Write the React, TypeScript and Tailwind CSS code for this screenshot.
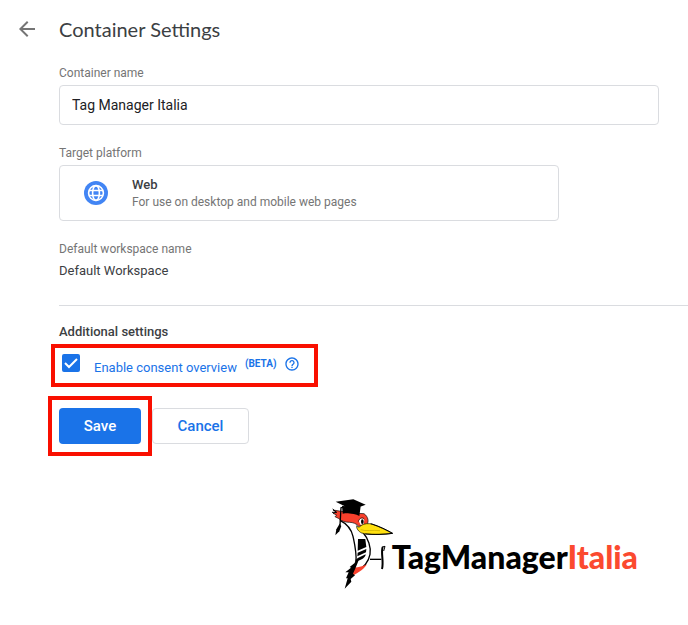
import { useState } from "react";

function BackArrow() {
  return (
    <svg viewBox="0 0 24 24" className="size-6" fill="#757575" aria-hidden="true">
      <path d="M20 11H7.83l5.59-5.59L12 4l-8 8 8 8 1.41-1.41L7.83 13H20v-2z" />
    </svg>
  );
}

function WebIcon() {
  return (
    <svg viewBox="0 0 24 24" className="size-6" aria-hidden="true">
      <circle cx="12" cy="12" r="12" fill="#4285f4" />
      <g fill="none" stroke="#fff" strokeWidth="1.6">
        <circle cx="12" cy="12" r="7.4" />
        <ellipse cx="12" cy="12" rx="3.4" ry="7.4" />
        <path d="M5 9.5h14M5 14.5h14" />
      </g>
    </svg>
  );
}

function HelpIcon() {
  return (
    <svg viewBox="0 0 24 24" className="size-4" fill="#1a73e8" aria-hidden="true">
      <path d="M11 18h2v-2h-2v2zm1-16C6.48 2 2 6.48 2 12s4.48 10 10 10 10-4.48 10-10S17.52 2 12 2zm0 18c-4.41 0-8-3.59-8-8s3.59-8 8-8 8 3.59 8 8-3.59 8-8 8zm0-14c-2.21 0-4 1.79-4 4h2c0-1.1.9-2 2-2s2 .9 2 2c0 2-3 1.75-3 5h2c0-2.25 3-2.5 3-5 0-2.21-1.79-4-4-4z" />
    </svg>
  );
}

function Woodpecker() {
  return (
    <svg viewBox="18 24 192 270" className="h-[90px] w-16 shrink-0" aria-hidden="true">
      {/* body */}
      <path d="M52 90C68 100 80 112 86 132C94 160 98 190 97 206L78 244L90 246C106 236 124 226 134 210C144 190 140 166 128 146L120 122L96 94Z" fill="#fff" />
      <path d="M48 88C68 98 82 114 87 136C93 164 98 184 96 212" fill="none" stroke="#000" strokeWidth="4" />
      <path d="M118 126C132 142 142 168 138 190C134 212 122 228 96 243" fill="none" stroke="#000" strokeWidth="4" />
      {/* wing */}
      <path d="M102 144L124 144L127 168L101 179Z" fill="#000" />
      <path d="M101 185L127 174L126 184L100 196Z" fill="#000" />
      <path d="M100 202L125 190C124 200 114 206 97 212Z" fill="#000" />
      {/* tail */}
      <path d="M88 230C106 229 118 226 129 220C118 238 98 246 78 260Z" fill="#f8402c" />
      <path d="M96 204L92 216L77 228L81 230L64 244L74 244L66 262L71 262L62 293L82 272L80 264L93 253L87 248L95 230L104 208Z" fill="#000" />
      {/* head */}
      <path d="M27 57L37 64L27 67L38 72L33 77L43 82C53 91 65 94 77 94C86 94 98 98 104 106L128 101C136 92 132 76 120 68L82 66L52 61Z" fill="#f8402c" stroke="#000" strokeWidth="2" />
      <path d="M26 54L38 64L24 64" fill="none" stroke="#000" strokeWidth="3" />
      <path d="M104 90C107 80 117 79 121 87L119 100L110 102Z" fill="#fff" />
      <path d="M103 92C106 80 116 78 121 84" fill="none" stroke="#000" strokeWidth="2" />
      <ellipse cx="115" cy="92" rx="4" ry="7" fill="#000" />
      {/* beak */}
      <path d="M98 104C103 111 108 108 112 103C120 98 134 96 146 100C168 108 188 118 205 127C174 131 132 132 113 126C103 121 97 113 98 104Z" fill="#ffe010" stroke="#000" strokeWidth="2" />
      <path d="M140 98C168 106 188 117 206 127C180 131 150 131 124 129" fill="none" stroke="#000" strokeWidth="3" />
      <path d="M110 116C126 122 146 116 168 119" fill="none" stroke="#c4a800" strokeWidth="2" />
      {/* graduation cap */}
      <path d="M54 44L84 50L110 46L106 75C91 67 73 65 56 68Z" fill="#000" />
      <path d="M35 32L88 25L125 41L84 56Z" fill="#000" />
      <path d="M82 43L51 50L48 102" fill="none" stroke="#000" strokeWidth="4" />
      <path d="M47 98L52 105L46 121L34 133L37 115Z" fill="#000" />
      {/* perch */}
      <path d="M138 205H172" fill="none" stroke="#000" strokeWidth="4" />
      <path d="M176 168C170 184 180 212 174 234" fill="none" stroke="#000" strokeWidth="6" />
      <path d="M174 168L183 166L179 180" fill="none" stroke="#000" strokeWidth="3" />
    </svg>
  );
}

const label = "block text-xs leading-4 text-[#757575]";

export default function App() {
  const [name, setName] = useState("Tag Manager Italia");
  const [consent, setConsent] = useState(true);

  return (
    <div className="min-h-screen overflow-x-hidden bg-white pb-8 font-[Roboto,'Liberation_Sans',sans-serif] text-[#3c4043]">
      <header className="flex items-center gap-5 pt-[15px] pl-[15px]">
        <button type="button" aria-label="Back">
          <BackArrow />
        </button>
        <h1 className="font-[Lato,Roboto,sans-serif] text-xl leading-7">Container Settings</h1>
      </header>

      <main className="pt-[22px] pl-[59px]">
        <div className="pr-[29px]">
          <label htmlFor="container-name" className={label}>
            Container name
          </label>
          <input
            id="container-name"
            value={name}
            onChange={(e) => setName(e.target.value)}
            className="mt-1 block h-10 w-full rounded border border-[#dadce0] px-3 text-sm text-[#202124] outline-none"
          />
        </div>

        <section className="mt-5 pr-[129px]">
          <h2 className={label}>Target platform</h2>
          <div className="mt-1 flex h-14 items-center gap-6 rounded border border-[#dadce0] pl-6">
            <WebIcon />
            <div>
              <p className="text-[13px] leading-[18px] font-medium">Web</p>
              <p className="text-xs leading-4 text-[#757575]">For use on desktop and mobile web pages</p>
            </div>
          </div>
        </section>

        <section className="mt-5">
          <h2 className={label}>Default workspace name</h2>
          <p className="mt-1 text-[13px] leading-5">Default Workspace</p>
        </section>

        <hr className="mt-6 border-[#dadce0]" />

        <section className="mt-4">
          <h2 className="text-[13px] leading-5 font-medium">Additional settings</h2>
          <div className="mt-[2px] -ml-2 flex h-[43px] w-[267px] items-start border-4 border-[#f90f00] pt-[6px] pl-[7px]">
            <input
              id="consent"
              type="checkbox"
              checked={consent}
              onChange={(e) => setConsent(e.target.checked)}
              className="peer size-[18px] shrink-0 appearance-none rounded-xs border-2 border-[#1a73e8] checked:bg-[#1a73e8]"
            />
            <svg viewBox="0 0 18 18" className="pointer-events-none -ml-[18px] hidden size-[18px] shrink-0 peer-checked:block" aria-hidden="true">
              <path d="M3 9l4 4 8-8" fill="none" stroke="#fff" strokeWidth="2" />
            </svg>
            <label htmlFor="consent" className="ml-[14px] flex pt-1 text-[13px] leading-5 text-[#1a73e8]">
              Enable consent overview
              <span className="ml-2 text-[10px] leading-3 font-bold">(BETA)</span>
            </label>
            <button type="button" aria-label="Help" className="ml-2 pt-[2px]">
              <HelpIcon />
            </button>
          </div>
        </section>

        <div className="mt-[9px] -ml-[11px] flex items-center text-[15px] font-medium">
          <div className="border-4 border-[#f90f00] px-[7px] py-2">
            <button type="button" className="block h-9 w-[82px] rounded bg-[#1a73e8] text-white">
              Save
            </button>
          </div>
          <button type="button" className="h-9 w-[97px] rounded border border-[#dadce0] text-[#1a73e8]">
            Cancel
          </button>
        </div>
      </main>

      <footer className="mt-[43px] flex items-end justify-end pr-[50px]">
        <Woodpecker />
        <p className="-ml-[2px] pb-3 font-[Lato,sans-serif] text-[32px] leading-10 font-black text-black">
          TagManager<span className="text-[#fb4a2f]">Italia</span>
        </p>
      </footer>
    </div>
  );
}
